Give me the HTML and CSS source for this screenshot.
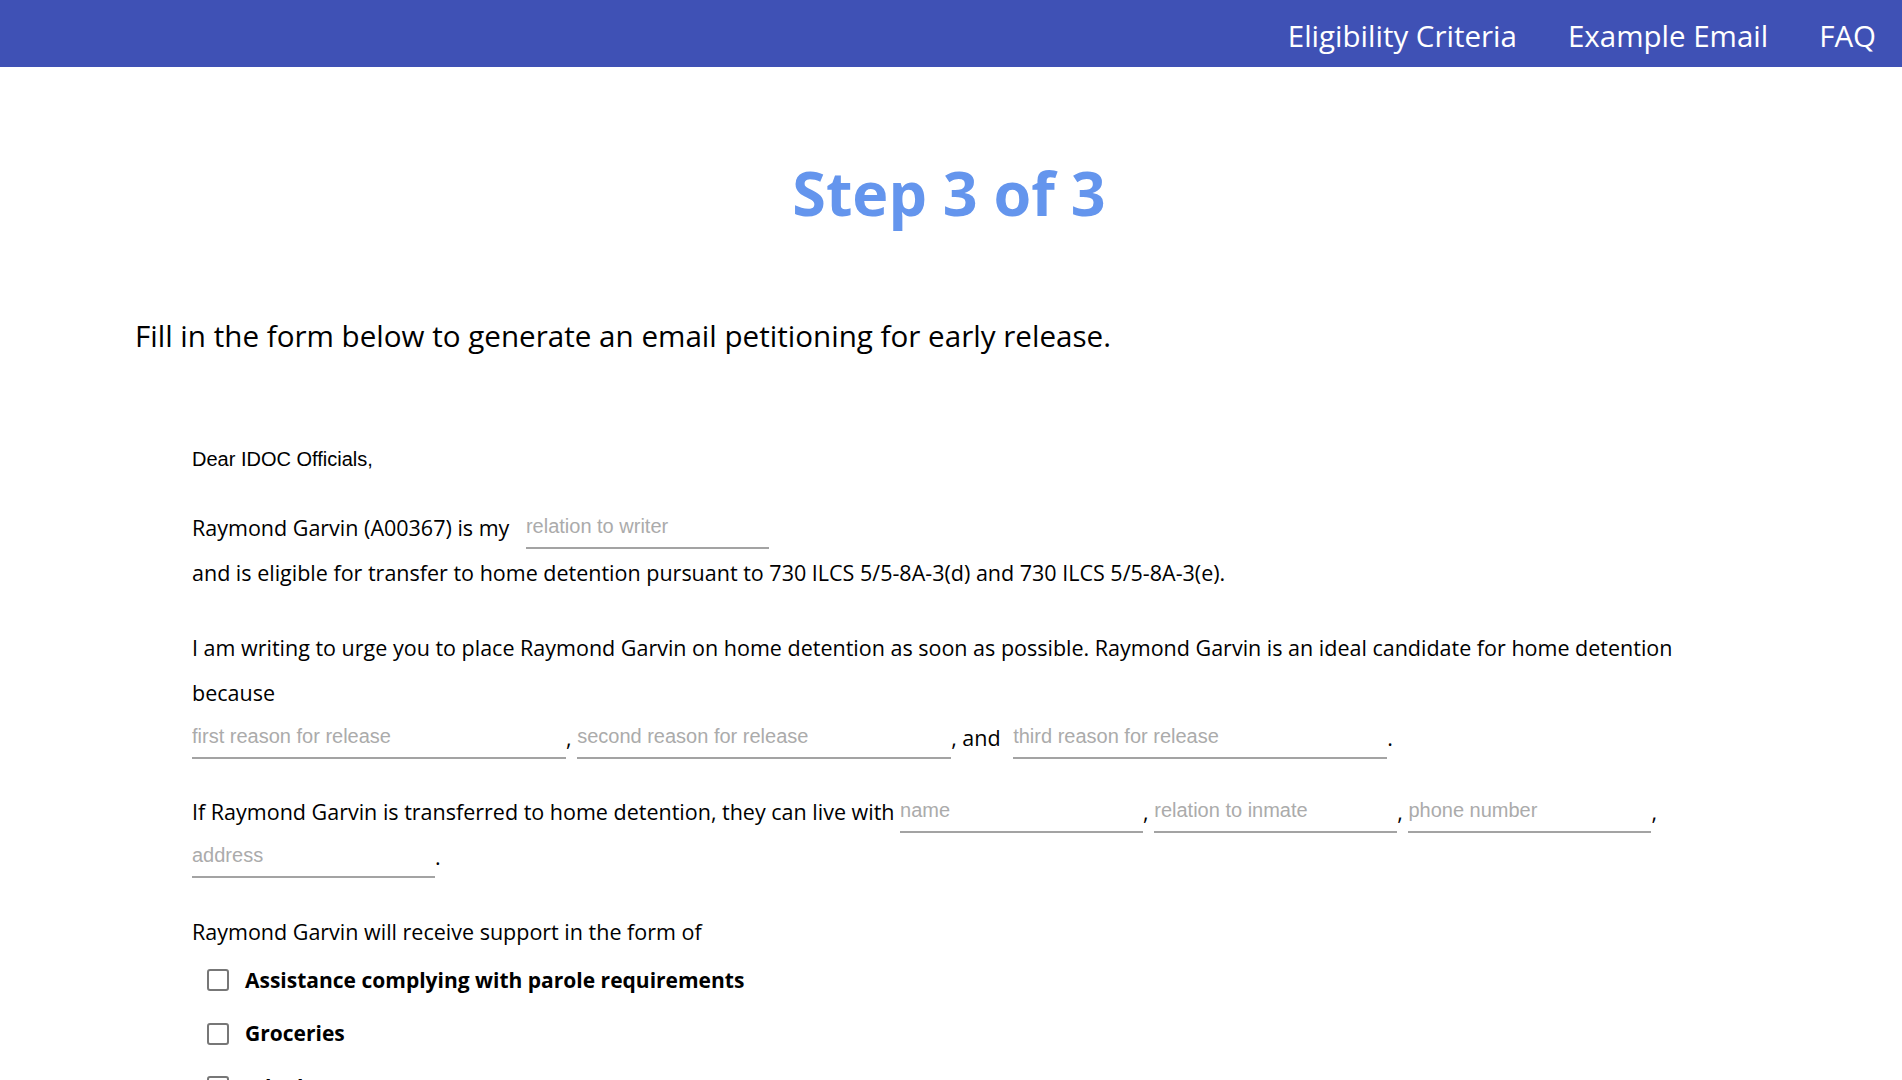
FILE: index.html
```html
<!DOCTYPE html>
<html lang="en">
<head>
<meta charset="utf-8">
<title>Step 3 of 3</title>
<link rel="stylesheet" href="styles.css">
</head>
<body>
<nav class="nav">
  <a class="nav-link" href="#">Eligibility Criteria</a>
  <a class="nav-link" href="#">Example Email</a>
  <a class="nav-link" href="#">FAQ</a>
</nav>
<main class="page">
  <h1 class="step-title">Step 3 of 3</h1>
  <p class="intro">Fill in the form below to generate an email petitioning for early release.</p>

  <form class="letter">
    <p class="salutation">Dear IDOC Officials,</p>

    <p class="para">Raymond Garvin (A00367) is my <input class="blank short first" type="text" placeholder="relation to writer"><br>and is eligible for transfer to home detention pursuant to 730 ILCS 5/5-8A-3(d) and 730 ILCS 5/5-8A-3(e).</p>

    <p class="para reasons">I am writing to urge you to place Raymond Garvin on home detention as soon as possible. Raymond Garvin is an ideal candidate for home detention because<br><input class="blank long" type="text" placeholder="first reason for release">, <input class="blank long" type="text" placeholder="second reason for release">, and <input class="blank long after-and" type="text" placeholder="third reason for release">.</p>

    <p class="para live">If Raymond Garvin is transferred to home detention, they can live with <input class="blank short" type="text" placeholder="name">, <input class="blank short" type="text" placeholder="relation to inmate">, <input class="blank short" type="text" placeholder="phone number">, <input class="blank short" type="text" placeholder="address">.</p>

    <p class="para lead">Raymond Garvin will receive support in the form of</p>
    <ul class="options">
      <li class="option"><label class="option-label"><input class="check" type="checkbox"><span>Assistance complying with parole requirements</span></label></li>
      <li class="option"><label class="option-label"><input class="check" type="checkbox"><span>Groceries</span></label></li>
      <li class="option"><label class="option-label"><input class="check" type="checkbox"><span>Job placement</span></label></li>
      <li class="option"><label class="option-label"><input class="check" type="checkbox"><span>Housing</span></label></li>
      <li class="option"><label class="option-label"><input class="check" type="checkbox"><span>Transportation</span></label></li>
      <li class="option"><label class="option-label"><input class="check" type="checkbox"><span>Medical care</span></label></li>
      <li class="option"><label class="option-label"><input class="check" type="checkbox"><span>Other</span></label></li>
    </ul>

    <p class="para">Please consider these factors and release Raymond Garvin to home detention as soon as possible.</p>
    <p class="para">Sincerely,<br><input class="blank short" type="text" placeholder="your name"></p>
    <div class="actions"><button class="generate" type="button">Generate Email</button></div>
  </form>
</main>
</body>
</html>
```
FILE: styles.css
```css
::-webkit-scrollbar {
  width: 3px;
}
::-webkit-scrollbar-track {
  background: #f1f1f1;
}
::-webkit-scrollbar-thumb {
  background: #c1c1c1;
}

body {
  margin: 0;
  font-family: "Open Sans", "Noto Sans", sans-serif;
  color: #000;
  background: #fff;
}

.nav {
  height: 67px;
  box-sizing: border-box;
  background: #3f51b5;
  display: flex;
  justify-content: flex-end;
  align-items: center;
  gap: 51px;
  padding: 3px 26px 0 0;
}

.nav-link {
  color: #fff;
  font-size: 29.5px;
  text-decoration: none;
  white-space: nowrap;
}

.page {
  padding: 0 135px 120px;
}

.step-title {
  margin: 84px 0 0;
  padding-right: 4px;
  text-align: center;
  color: #6495ed;
  font-size: 61px;
  font-weight: 700;
  line-height: normal;
}

.intro {
  margin: 80.5px 0 0;
  font-size: 29.6px;
  line-height: normal;
}

.letter {
  margin: 81px 0 0;
  padding: 0 57px;
  font-size: 21.5px;
  line-height: 45px;
}

.salutation {
  margin: 0 0 23px;
  font-family: "Liberation Sans", Arial, sans-serif;
  font-size: 20px;
}

.para {
  margin: 0 0 30px;
}

.para.reasons {
  margin-bottom: 29px;
}

.para.live {
  margin-bottom: 30px;
}

.para.lead {
  margin-bottom: 0;
}

.blank {
  box-sizing: border-box;
  height: 36px;
  padding: 2px 0 9px;
  border: none;
  border-bottom: 2px solid #a3a3a3;
  outline: none;
  background: transparent;
  font-family: "Liberation Sans", Arial, sans-serif;
  font-size: 20px;
  color: #222;
  vertical-align: 3px;
}

.blank::placeholder {
  color: #ababab;
}

.blank.short {
  width: 243px;
}

.blank.long {
  width: 374px;
}

.blank.first {
  margin-left: 11px;
}

.blank.after-and {
  margin-left: 7px;
}

.options {
  list-style: none;
  margin: 0 0 32px;
  padding: 0 0 0 15px;
}

.option {
  height: 53.5px;
  display: flex;
  align-items: center;
}

.option-label {
  display: flex;
  align-items: center;
  gap: 16px;
  font-size: 21px;
  font-weight: 700;
  line-height: 1.2;
}

.check {
  appearance: none;
  -webkit-appearance: none;
  margin: 0;
  width: 22px;
  height: 22px;
  box-sizing: border-box;
  border: 2px solid #777;
  border-radius: 3px;
  background: #fff;
}

.actions {
  padding-top: 20px;
}

.generate {
  font-family: "Open Sans", sans-serif;
  font-size: 20px;
  color: #fff;
  background: #3f51b5;
  border: none;
  border-radius: 4px;
  padding: 12px 28px;
}
```
